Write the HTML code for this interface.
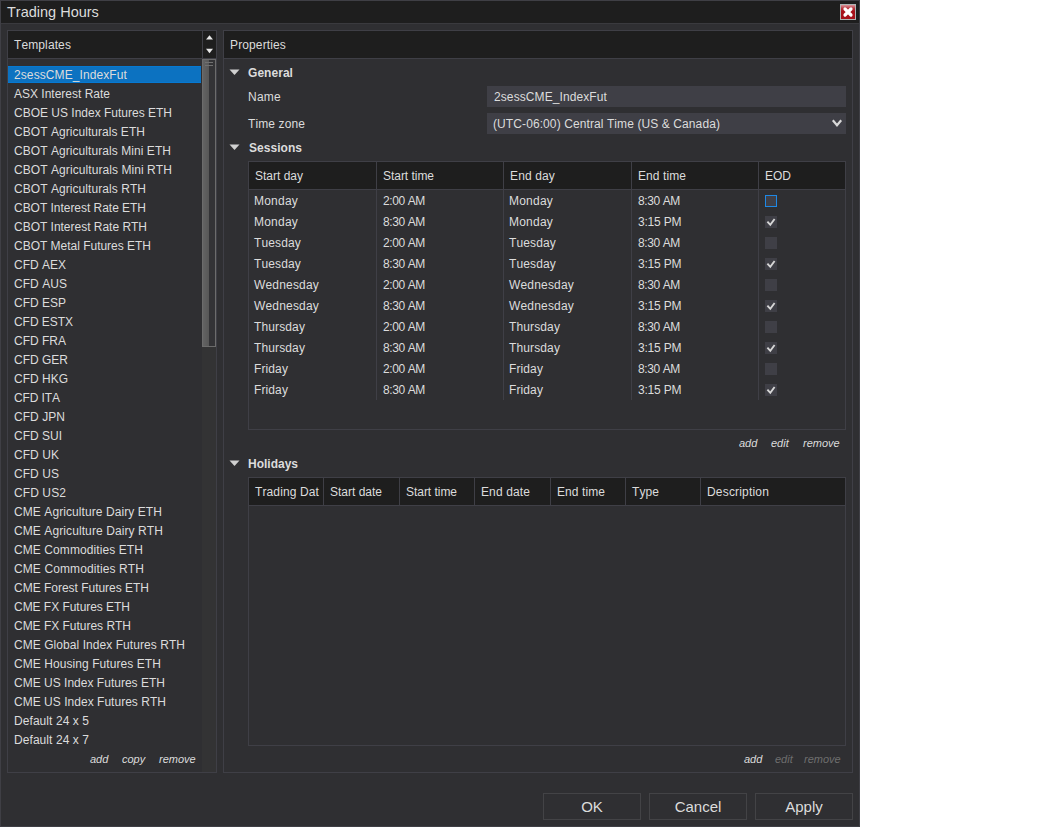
<!DOCTYPE html>
<html><head><meta charset="utf-8"><style>
html,body{margin:0;padding:0;background:#fff;width:1049px;height:827px;overflow:hidden;}
body{position:relative;font-family:"Liberation Sans",sans-serif;font-size:12px;color:#dcdcdc;}
div{box-sizing:border-box;}
.t{position:absolute;white-space:nowrap;line-height:14px;height:14px;font-kerning:none;}
.i{font-style:italic;font-size:11px;}
.b{font-weight:bold;}
</style></head><body>
<div style="position:absolute;left:0px;top:0px;width:860px;height:827px;background:#2f2f32;border:1px solid #3f3f45;"></div>
<div style="position:absolute;left:1px;top:1px;width:858px;height:22px;background:#1e1e1e;"></div>
<div style="position:absolute;left:1px;top:23px;width:858px;height:1px;background:#3a3a3e;"></div>
<div class="t" style="left:7px;top:4px;font-size:14.5px;line-height:16px;height:16px;">Trading Hours</div>
<div style="position:absolute;left:840px;top:4px;width:16px;height:16px;background:linear-gradient(#d9959b,#b8343c 25%,#a8121a 45%,#a6121a);border:1px solid #aeb4b4;box-sizing:border-box;"></div>
<svg style="position:absolute;left:840px;top:4px" width="16" height="16" viewBox="0 0 16 16"><path d="M5 5L11 11M11 5L5 11" stroke="#fff" stroke-width="3.2" stroke-linecap="round"/></svg>
<div style="position:absolute;left:7px;top:30px;width:210px;height:743px;border:1px solid #3f3f46;background:#2f2f32;"></div>
<div style="position:absolute;left:8px;top:31px;width:208px;height:27px;background:#1e1e1e;"></div>
<div style="position:absolute;left:8px;top:58px;width:208px;height:1px;background:#3f3f46;"></div>
<div style="position:absolute;left:202px;top:31px;width:1px;height:27px;background:#3f3f46;"></div>
<div class="t" style="left:14px;top:38px;letter-spacing:0.109px;">Templates</div>
<svg style="position:absolute;left:203px;top:31px" width="13" height="27"><path d="M3 8.6L6.5 4.2L10 8.6Z" fill="#e8e8e8"/><path d="M3 17.8L10 17.8L6.5 22.2Z" fill="#e8e8e8"/></svg>
<div style="position:absolute;left:202px;top:59px;width:14px;height:713px;background:#333334;"></div>
<div style="position:absolute;left:202px;top:59px;width:14px;height:288px;background:linear-gradient(90deg,#636363 0px,#575757 6px,#333336 6px);border:1px solid #6c6c6c;"></div>
<div style="position:absolute;left:205px;top:62px;width:8px;height:1px;background:#717171;"></div>
<div style="position:absolute;left:205px;top:65px;width:8px;height:1px;background:#717171;"></div>
<div style="position:absolute;left:8px;top:66px;width:193px;height:17px;background:#0c72c1;border-top:1px solid #0679d2;border-bottom:1px solid #0679d2;"></div>
<div class="t" style="left:14px;top:68px;letter-spacing:0.095px;">2sessCME_IndexFut</div>
<div class="t" style="left:14px;top:87px;letter-spacing:-0.003px;">ASX Interest Rate</div>
<div class="t" style="left:14px;top:106px;letter-spacing:-0.002px;">CBOE US Index Futures ETH</div>
<div class="t" style="left:14px;top:125px;letter-spacing:0.044px;">CBOT Agriculturals ETH</div>
<div class="t" style="left:14px;top:144px;letter-spacing:0.061px;">CBOT Agriculturals Mini ETH</div>
<div class="t" style="left:14px;top:163px;letter-spacing:0.073px;">CBOT Agriculturals Mini RTH</div>
<div class="t" style="left:14px;top:182px;letter-spacing:0.060px;">CBOT Agriculturals RTH</div>
<div class="t" style="left:14px;top:201px;letter-spacing:-0.032px;">CBOT Interest Rate ETH</div>
<div class="t" style="left:14px;top:220px;letter-spacing:-0.017px;">CBOT Interest Rate RTH</div>
<div class="t" style="left:14px;top:239px;letter-spacing:-0.016px;">CBOT Metal Futures ETH</div>
<div class="t" style="left:14px;top:258px;letter-spacing:-0.001px;">CFD AEX</div>
<div class="t" style="left:14px;top:277px;letter-spacing:0.047px;">CFD AUS</div>
<div class="t" style="left:14px;top:296px;letter-spacing:-0.001px;">CFD ESP</div>
<div class="t" style="left:14px;top:315px;letter-spacing:-0.042px;">CFD ESTX</div>
<div class="t" style="left:14px;top:334px;letter-spacing:0.001px;">CFD FRA</div>
<div class="t" style="left:14px;top:353px;letter-spacing:0.000px;">CFD GER</div>
<div class="t" style="left:14px;top:372px;letter-spacing:0.000px;">CFD HKG</div>
<div class="t" style="left:14px;top:391px;letter-spacing:-0.095px;">CFD ITA</div>
<div class="t" style="left:14px;top:410px;letter-spacing:0.048px;">CFD JPN</div>
<div class="t" style="left:14px;top:429px;letter-spacing:0.000px;">CFD SUI</div>
<div class="t" style="left:14px;top:448px;letter-spacing:0.056px;">CFD UK</div>
<div class="t" style="left:14px;top:467px;letter-spacing:0.056px;">CFD US</div>
<div class="t" style="left:14px;top:486px;letter-spacing:0.094px;">CFD US2</div>
<div class="t" style="left:14px;top:505px;letter-spacing:0.079px;">CME Agriculture Dairy ETH</div>
<div class="t" style="left:14px;top:524px;letter-spacing:0.092px;">CME Agriculture Dairy RTH</div>
<div class="t" style="left:14px;top:543px;letter-spacing:0.087px;">CME Commodities ETH</div>
<div class="t" style="left:14px;top:562px;letter-spacing:0.104px;">CME Commodities RTH</div>
<div class="t" style="left:14px;top:581px;letter-spacing:-0.016px;">CME Forest Futures ETH</div>
<div class="t" style="left:14px;top:600px;letter-spacing:-0.038px;">CME FX Futures ETH</div>
<div class="t" style="left:14px;top:619px;letter-spacing:-0.019px;">CME FX Futures RTH</div>
<div class="t" style="left:14px;top:638px;letter-spacing:0.058px;">CME Global Index Futures RTH</div>
<div class="t" style="left:14px;top:657px;letter-spacing:0.071px;">CME Housing Futures ETH</div>
<div class="t" style="left:14px;top:676px;letter-spacing:0.012px;">CME US Index Futures ETH</div>
<div class="t" style="left:14px;top:695px;letter-spacing:0.026px;">CME US Index Futures RTH</div>
<div class="t" style="left:14px;top:714px;letter-spacing:0.068px;">Default 24 x 5</div>
<div class="t" style="left:14px;top:733px;letter-spacing:0.068px;">Default 24 x 7</div>
<div class="t" style="left:90px;top:752px;font-style:italic;font-size:11px;">add</div>
<div class="t" style="left:122px;top:752px;font-style:italic;font-size:11px;">copy</div>
<div class="t" style="left:159px;top:752px;font-style:italic;font-size:11px;">remove</div>
<div style="position:absolute;left:223px;top:30px;width:630px;height:743px;border:1px solid #3f3f46;background:#2f2f32;"></div>
<div style="position:absolute;left:224px;top:31px;width:628px;height:27px;background:#1e1e1e;"></div>
<div style="position:absolute;left:224px;top:58px;width:628px;height:1px;background:#3f3f46;"></div>
<div class="t" style="left:230px;top:38px;letter-spacing:0.131px;">Properties</div>
<svg style="position:absolute;left:229px;top:69px" width="11" height="7"><path d="M0.5 0.5L10.5 0.5L5.5 6Z" fill="#d0d0d0"/></svg>
<div class="t" style="left:248px;top:66px;letter-spacing:0.044px;font-weight:bold;">General</div>
<div class="t" style="left:248px;top:90px;letter-spacing:0.248px;">Name</div>
<div class="t" style="left:248px;top:117px;letter-spacing:0.109px;">Time zone</div>
<div style="position:absolute;left:487px;top:86px;width:359px;height:21px;background:#3f3f46;"></div>
<div class="t" style="left:494px;top:90px;letter-spacing:0.095px;">2sessCME_IndexFut</div>
<div style="position:absolute;left:487px;top:113px;width:359px;height:21px;background:#3f3f46;"></div>
<div class="t" style="left:493px;top:117px;letter-spacing:0.095px;">(UTC-06:00) Central Time (US &amp; Canada)</div>
<svg style="position:absolute;left:831px;top:118px" width="12" height="9"><path d="M1.8 2.2L6 7.2L10.2 2.2" stroke="#d8d8d8" stroke-width="2.2" fill="none"/></svg>
<svg style="position:absolute;left:229px;top:144px" width="11" height="7"><path d="M0.5 0.5L10.5 0.5L5.5 6Z" fill="#d0d0d0"/></svg>
<div class="t" style="left:249px;top:141px;letter-spacing:0.038px;font-weight:bold;">Sessions</div>
<div style="position:absolute;left:248px;top:161px;width:598px;height:269px;border:1px solid #3f3f46;"></div>
<div style="position:absolute;left:249px;top:162px;width:596px;height:27px;background:#1e1e1e;"></div>
<div style="position:absolute;left:249px;top:189px;width:596px;height:1px;background:#3f3f46;"></div>
<div style="position:absolute;left:376px;top:162px;width:1px;height:238px;background:#3f3f46;"></div>
<div style="position:absolute;left:503px;top:162px;width:1px;height:238px;background:#3f3f46;"></div>
<div style="position:absolute;left:631px;top:162px;width:1px;height:238px;background:#3f3f46;"></div>
<div style="position:absolute;left:758px;top:162px;width:1px;height:238px;background:#3f3f46;"></div>
<div class="t" style="left:255px;top:169px;letter-spacing:-0.003px;">Start day</div>
<div class="t" style="left:383px;top:169px;letter-spacing:-0.035px;">Start time</div>
<div class="t" style="left:510px;top:169px;letter-spacing:0.138px;">End day</div>
<div class="t" style="left:638px;top:169px;letter-spacing:0.081px;">End time</div>
<div class="t" style="left:765px;top:169px;letter-spacing:-0.001px;">EOD</div>
<div class="t" style="left:254px;top:194px;letter-spacing:0.218px;">Monday</div>
<div class="t" style="left:383px;top:194px;letter-spacing:-0.400px;">2:00 AM</div>
<div class="t" style="left:509px;top:194px;letter-spacing:0.218px;">Monday</div>
<div class="t" style="left:638px;top:194px;letter-spacing:-0.400px;">8:30 AM</div>
<div style="position:absolute;left:765px;top:195px;width:12px;height:12px;background:#3f3f46;border:1px solid #1e88e5;"></div>
<div class="t" style="left:254px;top:215px;letter-spacing:0.218px;">Monday</div>
<div class="t" style="left:383px;top:215px;letter-spacing:-0.400px;">8:30 AM</div>
<div class="t" style="left:509px;top:215px;letter-spacing:0.218px;">Monday</div>
<div class="t" style="left:638px;top:215px;letter-spacing:-0.200px;">3:15 PM</div>
<div style="position:absolute;left:765px;top:216px;width:12px;height:12px;background:#3f3f46;"></div>
<svg style="position:absolute;left:765px;top:216px" width="12" height="12"><path d="M2.4 5.6L5.3 8.8L9.6 3" stroke="#d6d6d6" stroke-width="1.9" fill="none"/></svg>
<div class="t" style="left:254px;top:236px;letter-spacing:0.139px;">Tuesday</div>
<div class="t" style="left:383px;top:236px;letter-spacing:-0.400px;">2:00 AM</div>
<div class="t" style="left:509px;top:236px;letter-spacing:0.139px;">Tuesday</div>
<div class="t" style="left:638px;top:236px;letter-spacing:-0.400px;">8:30 AM</div>
<div style="position:absolute;left:765px;top:237px;width:12px;height:12px;background:#3f3f46;"></div>
<div class="t" style="left:254px;top:257px;letter-spacing:0.139px;">Tuesday</div>
<div class="t" style="left:383px;top:257px;letter-spacing:-0.400px;">8:30 AM</div>
<div class="t" style="left:509px;top:257px;letter-spacing:0.139px;">Tuesday</div>
<div class="t" style="left:638px;top:257px;letter-spacing:-0.200px;">3:15 PM</div>
<div style="position:absolute;left:765px;top:258px;width:12px;height:12px;background:#3f3f46;"></div>
<svg style="position:absolute;left:765px;top:258px" width="12" height="12"><path d="M2.4 5.6L5.3 8.8L9.6 3" stroke="#d6d6d6" stroke-width="1.9" fill="none"/></svg>
<div class="t" style="left:254px;top:278px;letter-spacing:0.181px;">Wednesday</div>
<div class="t" style="left:383px;top:278px;letter-spacing:-0.400px;">2:00 AM</div>
<div class="t" style="left:509px;top:278px;letter-spacing:0.181px;">Wednesday</div>
<div class="t" style="left:638px;top:278px;letter-spacing:-0.400px;">8:30 AM</div>
<div style="position:absolute;left:765px;top:279px;width:12px;height:12px;background:#3f3f46;"></div>
<div class="t" style="left:254px;top:299px;letter-spacing:0.181px;">Wednesday</div>
<div class="t" style="left:383px;top:299px;letter-spacing:-0.400px;">8:30 AM</div>
<div class="t" style="left:509px;top:299px;letter-spacing:0.181px;">Wednesday</div>
<div class="t" style="left:638px;top:299px;letter-spacing:-0.200px;">3:15 PM</div>
<div style="position:absolute;left:765px;top:300px;width:12px;height:12px;background:#3f3f46;"></div>
<svg style="position:absolute;left:765px;top:300px" width="12" height="12"><path d="M2.4 5.6L5.3 8.8L9.6 3" stroke="#d6d6d6" stroke-width="1.9" fill="none"/></svg>
<div class="t" style="left:254px;top:320px;letter-spacing:0.122px;">Thursday</div>
<div class="t" style="left:383px;top:320px;letter-spacing:-0.400px;">2:00 AM</div>
<div class="t" style="left:509px;top:320px;letter-spacing:0.122px;">Thursday</div>
<div class="t" style="left:638px;top:320px;letter-spacing:-0.400px;">8:30 AM</div>
<div style="position:absolute;left:765px;top:321px;width:12px;height:12px;background:#3f3f46;"></div>
<div class="t" style="left:254px;top:341px;letter-spacing:0.122px;">Thursday</div>
<div class="t" style="left:383px;top:341px;letter-spacing:-0.400px;">8:30 AM</div>
<div class="t" style="left:509px;top:341px;letter-spacing:0.122px;">Thursday</div>
<div class="t" style="left:638px;top:341px;letter-spacing:-0.200px;">3:15 PM</div>
<div style="position:absolute;left:765px;top:342px;width:12px;height:12px;background:#3f3f46;"></div>
<svg style="position:absolute;left:765px;top:342px" width="12" height="12"><path d="M2.4 5.6L5.3 8.8L9.6 3" stroke="#d6d6d6" stroke-width="1.9" fill="none"/></svg>
<div class="t" style="left:254px;top:362px;letter-spacing:0.110px;">Friday</div>
<div class="t" style="left:383px;top:362px;letter-spacing:-0.400px;">2:00 AM</div>
<div class="t" style="left:509px;top:362px;letter-spacing:0.110px;">Friday</div>
<div class="t" style="left:638px;top:362px;letter-spacing:-0.400px;">8:30 AM</div>
<div style="position:absolute;left:765px;top:363px;width:12px;height:12px;background:#3f3f46;"></div>
<div class="t" style="left:254px;top:383px;letter-spacing:0.110px;">Friday</div>
<div class="t" style="left:383px;top:383px;letter-spacing:-0.400px;">8:30 AM</div>
<div class="t" style="left:509px;top:383px;letter-spacing:0.110px;">Friday</div>
<div class="t" style="left:638px;top:383px;letter-spacing:-0.200px;">3:15 PM</div>
<div style="position:absolute;left:765px;top:384px;width:12px;height:12px;background:#3f3f46;"></div>
<svg style="position:absolute;left:765px;top:384px" width="12" height="12"><path d="M2.4 5.6L5.3 8.8L9.6 3" stroke="#d6d6d6" stroke-width="1.9" fill="none"/></svg>
<div class="t" style="left:739px;top:436px;font-style:italic;font-size:11px;">add</div>
<div class="t" style="left:771px;top:436px;font-style:italic;font-size:11px;">edit</div>
<div class="t" style="left:803px;top:436px;font-style:italic;font-size:11px;">remove</div>
<svg style="position:absolute;left:229px;top:460px" width="11" height="7"><path d="M0.5 0.5L10.5 0.5L5.5 6Z" fill="#d0d0d0"/></svg>
<div class="t" style="left:248px;top:457px;letter-spacing:-0.002px;font-weight:bold;">Holidays</div>
<div style="position:absolute;left:248px;top:477px;width:598px;height:269px;border:1px solid #3f3f46;"></div>
<div style="position:absolute;left:249px;top:478px;width:596px;height:27px;background:#1e1e1e;"></div>
<div style="position:absolute;left:249px;top:505px;width:596px;height:1px;background:#3f3f46;"></div>
<div style="position:absolute;left:323px;top:478px;width:1px;height:27px;background:#3f3f46;"></div>
<div style="position:absolute;left:399px;top:478px;width:1px;height:27px;background:#3f3f46;"></div>
<div style="position:absolute;left:474px;top:478px;width:1px;height:27px;background:#3f3f46;"></div>
<div style="position:absolute;left:550px;top:478px;width:1px;height:27px;background:#3f3f46;"></div>
<div style="position:absolute;left:625px;top:478px;width:1px;height:27px;background:#3f3f46;"></div>
<div style="position:absolute;left:700px;top:478px;width:1px;height:27px;background:#3f3f46;"></div>
<div class="t" style="left:255px;top:485px;letter-spacing:0.119px;">Trading Dat</div>
<div class="t" style="left:330px;top:485px;letter-spacing:-0.003px;">Start date</div>
<div class="t" style="left:406px;top:485px;letter-spacing:-0.035px;">Start time</div>
<div class="t" style="left:481px;top:485px;letter-spacing:0.120px;">End date</div>
<div class="t" style="left:557px;top:485px;letter-spacing:0.081px;">End time</div>
<div class="t" style="left:632px;top:485px;letter-spacing:0.081px;">Type</div>
<div class="t" style="left:707px;top:485px;letter-spacing:0.180px;">Description</div>
<div class="t" style="left:744px;top:752px;font-style:italic;font-size:11px;">add</div>
<div class="t" style="left:775px;top:752px;font-style:italic;font-size:11px;color:#6e6e6e;">edit</div>
<div class="t" style="left:804px;top:752px;font-style:italic;font-size:11px;color:#6e6e6e;">remove</div>
<div style="position:absolute;left:543px;top:793px;width:98px;height:27px;border:1px solid #434346;text-align:center;font-size:15px;line-height:25px;color:#dcdcdc;">OK</div>
<div style="position:absolute;left:649px;top:793px;width:98px;height:27px;border:1px solid #434346;text-align:center;font-size:15px;line-height:25px;color:#dcdcdc;">Cancel</div>
<div style="position:absolute;left:755px;top:793px;width:98px;height:27px;border:1px solid #434346;text-align:center;font-size:15px;line-height:25px;color:#dcdcdc;">Apply</div>
</body></html>
